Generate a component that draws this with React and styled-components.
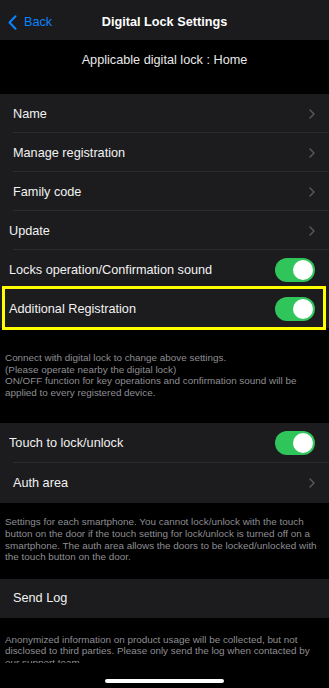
import React from "react";
import styled, { createGlobalStyle } from "styled-components";

const GlobalStyle = createGlobalStyle`
  html, body {
    margin: 0;
    padding: 0;
    background: #000;
  }
  body {
    font-family: "Liberation Sans", Arial, sans-serif;
    -webkit-font-smoothing: antialiased;
  }
`;

const Screen = styled.div`
  position: relative;
  width: 329px;
  height: 688px;
  overflow: hidden;
  background: #000;
  color: #fff;
`;

const NavBar = styled.div`
  height: 40px;
  background: #1b1b1d;
  display: grid;
  grid-template-columns: 1fr auto 1fr;
  align-items: center;
`;

const BackButton = styled.div`
  display: flex;
  align-items: center;
  gap: 7px;
  padding-left: 8px;
  padding-top: 4px;
  color: #0a84ff;
  font-size: 12.7px;
`;

const NavTitle = styled.div`
  font-size: 12.7px;
  font-weight: 700;
  padding-top: 4px;
`;

const Subtitle = styled.div`
  height: 54px;
  box-sizing: border-box;
  padding-top: 13px;
  text-align: center;
  font-size: 12.7px;
  color: #e8e8e8;
`;

const Group = styled.div`
  background: #1c1c1e;
`;

const RowWrap = styled.div`
  position: relative;
  height: ${(p) => p.h || 39}px;
  display: flex;
  align-items: center;
  justify-content: space-between;
  padding-left: ${(p) => p.indent}px;
  padding-right: 14px;
  box-sizing: border-box;
  &::after {
    content: "";
    display: ${(p) => (p.line ? "block" : "none")};
    position: absolute;
    left: 13px;
    right: 0;
    bottom: 0;
    height: 1px;
    background: #2c2c2e;
  }
`;

const Label = styled.span`
  font-size: 12.7px;
  color: #f2f2f2;
`;

const Toggle = styled.div`
  width: 40px;
  height: 24px;
  border-radius: 12px;
  background: #30c55a;
  position: relative;
  flex-shrink: 0;
  &::after {
    content: "";
    position: absolute;
    top: 2px;
    right: 2px;
    width: 20px;
    height: 20px;
    border-radius: 50%;
    background: #fff;
  }
`;

const Highlight = styled.div`
  position: absolute;
  top: -3px;
  bottom: -2px;
  left: 2px;
  right: 3px;
  border: 3px solid #ffff00;
  pointer-events: none;
`;

const Footer = styled.div`
  padding: ${(p) => p.pad};
  font-size: 9.9px;
  line-height: 11.6px;
  color: #8e8e93;
`;

const BottomBar = styled.div`
  position: absolute;
  left: 0;
  right: 0;
  bottom: 0;
  height: 25px;
  background: #000;
  display: flex;
  justify-content: center;
`;

const HomeIndicator = styled.div`
  margin-top: 16px;
  width: 119px;
  height: 4px;
  border-radius: 2px;
  background: #fff;
`;

const Chevron = () => (
  <svg width="6" height="10" viewBox="0 0 6 10">
    <path d="M1 1 L5 5 L1 9" fill="none" stroke="#5a5a5f" strokeWidth="1.4" strokeLinecap="round" strokeLinejoin="round" />
  </svg>
);

const BackChevron = () => (
  <svg width="9" height="15" viewBox="0 0 9 15">
    <path d="M7.5 1.2 L1.5 7.5 L7.5 13.8" fill="none" stroke="#0a84ff" strokeWidth="2" strokeLinecap="round" strokeLinejoin="round" />
  </svg>
);

const Row = ({ label, indent = 13, line, toggle, chevron, highlight, h }) => (
  <RowWrap indent={indent} line={line} h={h}>
    <Label>{label}</Label>
    {toggle && <Toggle />}
    {chevron && <Chevron />}
    {highlight && <Highlight />}
  </RowWrap>
);

export default function App() {
  return (
    <>
      <GlobalStyle />
      <Screen>
        <NavBar>
          <BackButton>
            <BackChevron />
            Back
          </BackButton>
          <NavTitle>Digital Lock Settings</NavTitle>
          <div />
        </NavBar>
        <Subtitle>Applicable digital lock : Home</Subtitle>

        <Group>
          <Row label="Name" line chevron />
          <Row label="Manage registration" line chevron />
          <Row label="Family code" line chevron />
          <Row label="Update" indent={9} line chevron />
          <Row label="Locks operation/Confirmation sound" indent={9} toggle />
          <Row label="Additional Registration" indent={9} toggle highlight />
        </Group>
        <Footer pad="24px 10px 25px 5px">
          Connect with digital lock to change above settings.
          <br />
          (Please operate nearby the digital lock)
          <br />
          ON/OFF function for key operations and confirmation sound will be
          applied to every registered device.
        </Footer>

        <Group>
          <Row label="Touch to lock/unlock" indent={9} line toggle h={40} />
          <Row label="Auth area" line={false} chevron h={40} />
        </Group>
        <Footer pad="13px 10px 16px 5px">
          Settings for each smartphone. You cannot lock/unlock with the touch
          button on the door if the touch setting for lock/unlock is turned off
          on a smartphone. The auth area allows the doors to be locked/unlocked
          with the touch button on the door.
        </Footer>

        <Group>
          <Row label="Send Log" h={39} />
        </Group>
        <Footer pad="16px 10px 0 5px">
          Anonymized information on product usage will be collected, but not
          disclosed to third parties. Please only send the log when contacted by
          our support team.
        </Footer>

        <BottomBar>
          <HomeIndicator />
        </BottomBar>
      </Screen>
    </>
  );
}
